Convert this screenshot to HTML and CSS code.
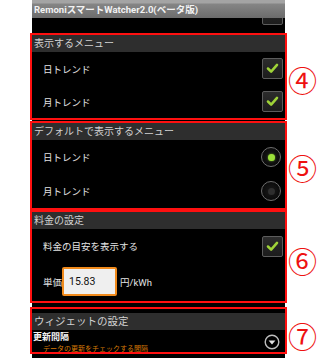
FILE: index.html
```html
<!DOCTYPE html>
<html lang="ja">
<head>
<meta charset="utf-8">
<title>Remoni設定</title>
<link rel="stylesheet" href="styles.css">
</head>
<body>
<div class="panel">
  <div class="titlebar">RemoniスマートWatcher2.0(ベータ版)</div>
  <div class="peek"><span class="check peek-check"></span></div>

  <section class="group g4">
    <div class="group-head">表示するメニュー</div>
    <div class="row r33"><span class="label">日トレンド</span><span class="check"><svg viewBox="0 0 21 21"><path d="M5.5 10.5 L9 14 L15.5 6.5"/></svg></span></div>
    <div class="row r33"><span class="label">月トレンド</span><span class="check"><svg viewBox="0 0 21 21"><path d="M5.5 10.5 L9 14 L15.5 6.5"/></svg></span></div>
    <span class="mark m4">④</span>
  </section>

  <section class="group g5">
    <div class="group-head">デフォルトで表示するメニュー</div>
    <div class="row r34"><span class="label">日トレンド</span><span class="radio on"></span></div>
    <div class="row r34"><span class="label">月トレンド</span><span class="radio"></span></div>
    <span class="mark m5">⑤</span>
  </section>

  <section class="group g6">
    <div class="group-head">料金の設定</div>
    <div class="row r34"><span class="label">料金の目安を表示する</span><span class="check"><svg viewBox="0 0 21 21"><path d="M5.5 10.5 L9 14 L15.5 6.5"/></svg></span></div>
    <div class="row price"><span class="label">単価</span><span class="input">15.83</span><span class="unit">円/kWh</span></div>
    <span class="mark m6">⑥</span>
  </section>

  <section class="group g7">
    <div class="group-head big">ウィジェットの設定</div>
    <div class="item">
      <div class="item-text">
        <div class="item-title">更新間隔</div>
        <div class="item-sub">データの更新をチェックする間隔</div>
      </div>
      <span class="drop"><svg viewBox="0 0 16 16"><circle cx="8" cy="8" r="6.8"/><path d="M4.6 6.6 L11.4 6.6 L8 10.4 Z"/></svg></span>
    </div>
    <span class="mark m7">⑦</span>
  </section>
</div>
</body>
</html>
```

FILE: styles.css
```css
html, body {
  margin: 0;
  padding: 0;
  background: #ffffff;
  overflow: hidden;
  height: 358px;
}
body {
  font-family: Roboto, "Noto Sans CJK JP", sans-serif;
}
.panel {
  margin-left: 32px;
  width: 253px;
  height: 358px;
  background: #000000;
  display: flex;
  flex-direction: column;
}
.titlebar {
  height: 18px;
  flex: none;
  box-sizing: border-box;
  padding: 4px 0 0 2px;
  background: linear-gradient(#a4a4a4 0, #a4a4a4 3px, #858585 4px, #6c6c6c 18px);
  color: #f2f2f2;
  font-size: 9.5px;
  font-weight: bold;
  line-height: 12px;
  white-space: nowrap;
}
.peek {
  height: 17px;
  flex: none;
  overflow: hidden;
  display: flex;
  justify-content: flex-end;
  padding-right: 2px;
}
.peek-check {
  margin-top: -14px;
}
.group {
  position: relative;
  flex: none;
  outline: 2px solid #ff1010;
  display: flex;
  flex-direction: column;
}
.g5 { margin-top: 5px; }
.g6 { margin-top: 4px; }
.g7 { margin-top: 8px; padding-top: 4px; height: 43px; box-sizing: border-box; }
.group-head {
  height: 17px;
  flex: none;
  background: #2e2e2e;
  color: #d2d2d2;
  font-size: 10px;
  line-height: 17px;
  padding-left: 2px;
  white-space: nowrap;
}
.group-head.big {
  font-size: 10.5px;
}
.row {
  display: flex;
  align-items: center;
  padding-left: 11px;
  padding-right: 2px;
  color: #e4e4e4;
  font-size: 9.5px;
}
.r33 { height: 33px; }
.r34 { height: 34px; }
.label {
  flex: 1;
  white-space: nowrap;
}
.check {
  width: 21px;
  height: 21px;
  box-sizing: border-box;
  border: 1px solid #5c5c5c;
  border-radius: 2px;
  background: linear-gradient(#2c2c2c, #1c1c1c);
  display: flex;
  align-items: center;
  justify-content: center;
  flex: none;
}
.check svg {
  width: 19px;
  height: 19px;
  fill: none;
  stroke: #9fd338;
  stroke-width: 2.8;
  stroke-linecap: round;
  stroke-linejoin: round;
}
.radio {
  width: 20px;
  height: 20px;
  box-sizing: border-box;
  border-radius: 50%;
  border: 1.5px solid #6e6e6e;
  background: radial-gradient(circle, #1a1a1a 0, #050505 100%);
  margin-right: 2px;
  display: flex;
  align-items: center;
  justify-content: center;
  flex: none;
}
.radio::after {
  content: "";
  width: 7px;
  height: 7px;
  border-radius: 50%;
  background: #2e2e2e;
}
.radio.on::after {
  background: #9be03a;
  box-shadow: 0 0 2px #7ab82a;
}
.price {
  height: 38px;
}
.price .label {
  flex: none;
  width: 19px;
}
.input {
  width: 55px;
  height: 29px;
  box-sizing: border-box;
  border: 2px solid #f08a1c;
  border-radius: 2px;
  background: #efefef;
  color: #111;
  font-size: 10.5px;
  line-height: 25px;
  padding-left: 5px;
  margin-top: -2px;
}
.unit {
  margin-left: 3px;
  font-size: 9.5px;
  color: #e4e4e4;
}
.item {
  display: flex;
  align-items: flex-start;
  height: 22px;
  padding-left: 1px;
  padding-right: 5px;
}
.item-text {
  flex: 1;
  padding-top: 2px;
}
.item-title {
  color: #f4f4f4;
  font-weight: bold;
  font-size: 9px;
  line-height: 11px;
}
.item-sub {
  color: #d67a06;
  font-size: 7px;
  line-height: 9px;
  padding-left: 10px;
  margin-top: 2px;
  white-space: nowrap;
}
.drop {
  width: 16px;
  height: 16px;
  flex: none;
  align-self: center;
  margin-top: 2px;
}
.drop svg {
  width: 16px;
  height: 16px;
  display: block;
}
.drop circle {
  fill: none;
  stroke: #bdbdbd;
  stroke-width: 1.4;
}
.drop path {
  fill: #e6e6e6;
}
.mark {
  position: absolute;
  left: 100%;
  margin-left: 3px;
  top: 50%;
  transform: translateY(-50%);
  color: #ee1111;
  font-family: "Noto Sans CJK JP", sans-serif;
  font-size: 29px;
  line-height: 29px;
}
.m4 { margin-top: 2px; }
.m5 { margin-top: 1px; }
.m6 { margin-top: 3px; }
.m7 { margin-top: 4px; }
```
